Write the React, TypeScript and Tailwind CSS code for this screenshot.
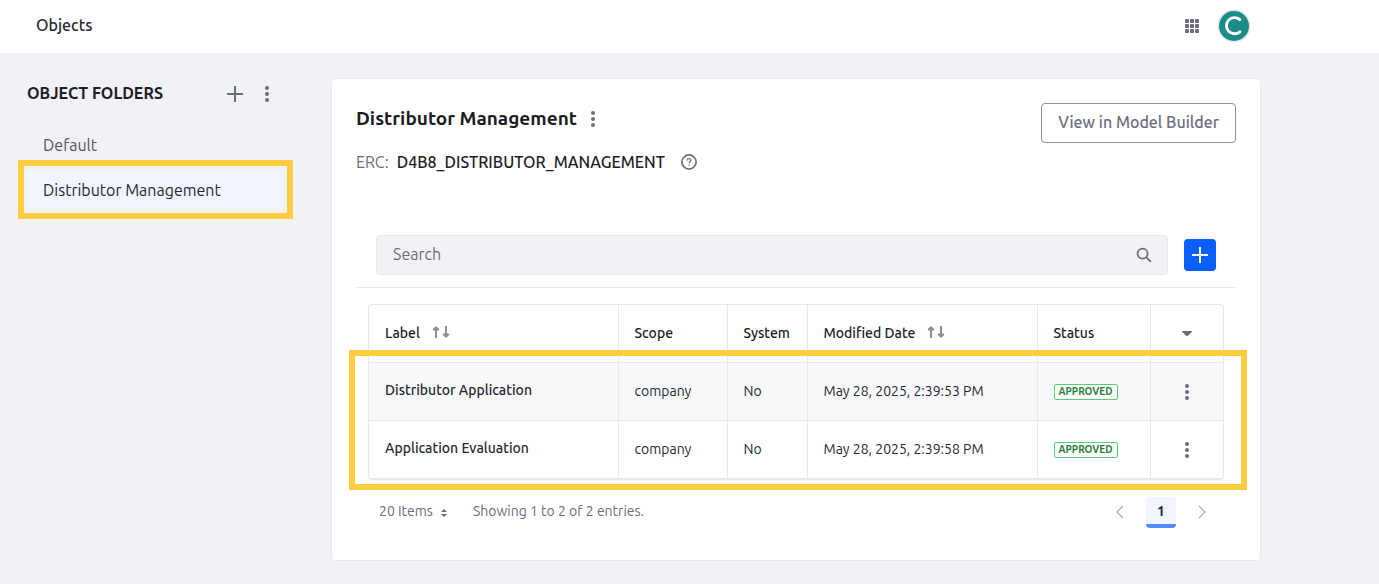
import type { ReactNode } from 'react'

interface ObjectEntry {
  label: string
  scope: string
  system: string
  modified: string
  status: string
}

const folders = ['Default', 'Distributor Management']

const entries: ObjectEntry[] = [
  {
    label: 'Distributor Application',
    scope: 'company',
    system: 'No',
    modified: 'May 28, 2025, 2:39:53 PM',
    status: 'Approved',
  },
  {
    label: 'Application Evaluation',
    scope: 'company',
    system: 'No',
    modified: 'May 28, 2025, 2:39:58 PM',
    status: 'Approved',
  },
]

function DotsIcon() {
  return (
    <svg className="h-4 w-4" viewBox="0 0 16 16" fill="currentColor" aria-hidden="true">
      <circle cx="8" cy="2" r="2" />
      <circle cx="8" cy="8" r="2" />
      <circle cx="8" cy="14" r="2" />
    </svg>
  )
}

function PlusIcon() {
  return (
    <svg className="h-4 w-4" viewBox="0 0 16 16" fill="currentColor" aria-hidden="true">
      <path d="M7 0h2v7h7v2H9v7H7V9H0V7h7z" />
    </svg>
  )
}

function GridIcon() {
  return (
    <svg className="h-4 w-4" viewBox="0 0 16 16" fill="currentColor" aria-hidden="true">
      {[1, 6, 11].map((y) =>
        [1, 6, 11].map((x) => <rect key={`${x}-${y}`} x={x} y={y} width="4" height="4" rx="0.8" />),
      )}
    </svg>
  )
}

function HelpIcon() {
  return (
    <svg className="h-4 w-4" viewBox="0 0 16 16" fill="none" stroke="currentColor" aria-hidden="true">
      <circle cx="8" cy="8" r="7.1" strokeWidth="1.7" />
      <path d="M6.2 6.5c0-2.4 3.6-2.3 3.6-.2 0 1.3-1.7 1.3-1.7 2.7" strokeWidth="1.3" />
      <circle cx="8.1" cy="11" r="0.8" fill="currentColor" stroke="none" />
    </svg>
  )
}

function SearchIcon() {
  return (
    <svg className="h-4 w-4" viewBox="0 0 16 16" fill="none" stroke="currentColor" aria-hidden="true">
      <circle cx="6.6" cy="6.6" r="5" strokeWidth="1.8" />
      <path d="M10.2 10.2l4.6 4.6" strokeWidth="1.8" />
    </svg>
  )
}

function SortIcon() {
  return (
    <svg className="h-3 w-[18px] text-[#8c8c92]" viewBox="0 0 18 12" fill="currentColor" aria-hidden="true">
      <path d="M4 0l3.4 3.2-.7 1.4H5V12H3V4.6H1.3L.6 3.2z" />
      <path d="M14 12l-3.4-3.2.7-1.4H13V0h2v7.4h1.7l.7 1.4z" />
    </svg>
  )
}

function ChevronIcon({ flip }: { flip?: boolean }) {
  return (
    <svg className="h-4 w-4" viewBox="0 0 16 16" fill="none" stroke="currentColor" aria-hidden="true">
      <path d={flip ? 'M5 2l6 6-6 6' : 'M11 2L5 8l6 6'} strokeWidth="1.4" />
    </svg>
  )
}

function IconButton({ label, children }: { label: string; children: ReactNode }) {
  return (
    <button
      type="button"
      aria-label={label}
      className="flex h-8 w-8 shrink-0 items-center justify-center rounded text-[#6b6c7e]"
    >
      {children}
    </button>
  )
}

function HeaderCell({ children, sortable }: { children: ReactNode; sortable?: boolean }) {
  return (
    <th scope="col" className="border-l border-[#e7e7ed] px-4 font-medium first:border-l-0">
      <div className="flex items-center gap-3">
        {children}
        {sortable && (
          <button type="button" aria-label="Sort" className="pb-0.5">
            <SortIcon />
          </button>
        )}
      </div>
    </th>
  )
}

function TopBar() {
  return (
    <header className="bg-white">
      <div className="flex h-[53px] max-w-[1260px] items-center justify-between pr-2 pb-0.5 pl-9">
        <h1 className="pb-0.5 text-base font-medium text-[#272833]">Objects</h1>
        <div className="flex items-center gap-2">
          <IconButton label="Applications">
            <GridIcon />
          </IconButton>
          <button
            type="button"
            aria-label="User menu"
            className="flex h-9 w-9 items-center justify-center rounded-full"
          >
            <svg className="h-[34px] w-[34px]" viewBox="0 0 34 34" fill="none" aria-hidden="true">
              <circle cx="17" cy="17" r="16.5" fill="#e4e6ea" />
              <circle cx="17" cy="17" r="15" fill="#1c8c8a" />
              <path
                d="M22.9 10.6a8.1 8.1 0 1 0 0 12.2"
                stroke="#fff"
                strokeWidth="2.9"
                strokeLinecap="round"
              />
            </svg>
          </button>
        </div>
      </div>
    </header>
  )
}

function Sidebar() {
  return (
    <aside className="w-[307px] shrink-0 pr-12">
      <div className="flex items-center justify-between pl-[3px]">
        <h2 className="pb-0.5 text-base font-semibold text-[#1c1c24] uppercase">Object Folders</h2>
        <div className="flex">
          <IconButton label="Add object folder">
            <PlusIcon />
          </IconButton>
          <IconButton label="Folder actions">
            <DotsIcon />
          </IconButton>
        </div>
      </div>
      <nav className="relative mt-4 flex flex-col gap-[5px] pl-[3px]">
        {folders.map((folder, i) => (
          <a
            key={folder}
            href="#"
            className={
              i === 1
                ? 'flex h-10 items-center rounded bg-[#f0f5ff] px-4 pb-0.5 text-base text-[#272833]'
                : 'flex h-10 items-center rounded px-4 pb-0.5 text-base text-[#54555f]'
            }
          >
            {folder}
          </a>
        ))}
        <div className="pointer-events-none absolute -right-[10px] -bottom-2 -left-[6px] h-[59px] border-6 border-[#ffcd3f]" />
      </nav>
    </aside>
  )
}

function ObjectTable() {
  return (
    <div className="relative mx-3 mt-4">
      <div className="overflow-hidden rounded border border-b-2 border-[#e7e7ed]">
        <table className="w-full table-fixed text-left text-sm text-[#272833]">
          <colgroup>
            <col />
            <col className="w-[109px]" />
            <col className="w-[80px]" />
            <col className="w-[230px]" />
            <col className="w-[113px]" />
            <col className="w-[73px]" />
          </colgroup>
          <thead>
            <tr className="h-[57px] text-[#1c1c24]">
              <HeaderCell sortable>Label</HeaderCell>
              <HeaderCell>Scope</HeaderCell>
              <HeaderCell>System</HeaderCell>
              <HeaderCell sortable>Modified Date</HeaderCell>
              <HeaderCell>Status</HeaderCell>
              <th scope="col" className="border-l border-[#e7e7ed]">
                <button
                  type="button"
                  aria-label="Columns"
                  className="mx-auto flex h-8 w-8 items-center justify-center text-[#6b6c7e]"
                >
                  <svg className="h-4 w-4" viewBox="0 0 16 16" fill="currentColor" aria-hidden="true">
                    <path d="M3.6 6h8.8c.6 0 .8.6.4 1l-4 3.7c-.5.4-1.1.4-1.6 0L3.2 7c-.4-.4-.2-1 .4-1z" />
                  </svg>
                </button>
              </th>
            </tr>
          </thead>
          <tbody>
            {entries.map((entry) => (
              <tr key={entry.label} className="h-[58px] border-t border-[#e7e7ed] odd:bg-[#f7f8fa]">
                <td className="px-4 pb-0.5 font-medium">
                  <a href="#">{entry.label}</a>
                </td>
                <td className="border-l border-[#e7e7ed] px-4">{entry.scope}</td>
                <td className="border-l border-[#e7e7ed] px-4">{entry.system}</td>
                <td className="border-l border-[#e7e7ed] px-4">{entry.modified}</td>
                <td className="border-l border-[#e7e7ed] px-4 pt-0.5">
                  <span className="flex h-4 w-fit items-center rounded-xs border border-[#5aca75] bg-white px-1 text-[10px] font-semibold text-[#287d3c] uppercase">
                    {entry.status}
                  </span>
                </td>
                <td className="border-l border-[#e7e7ed] pt-0.5">
                  <div className="flex justify-center">
                    <IconButton label={`Actions for ${entry.label}`}>
                      <DotsIcon />
                    </IconButton>
                  </div>
                </td>
              </tr>
            ))}
          </tbody>
        </table>
      </div>
      <div className="pointer-events-none absolute -right-[23px] -left-[19px] top-[46px] -bottom-[10px] border-6 border-[#ffcd3f]" />
    </div>
  )
}

function Pagination() {
  return (
    <div className="mx-3 mt-4 flex items-center justify-between pr-1.5 pl-[11px] text-sm text-[#6b6c7e]">
      <div className="flex items-center gap-[26px] pb-0.5">
        <button type="button" className="flex items-center gap-2">
          20 Items
          <svg className="mt-1 h-2 w-1.5" viewBox="0 0 6 8" fill="currentColor" aria-hidden="true">
            <path d="M3 0l3 3H0zM0 5h6L3 8z" />
          </svg>
        </button>
        <p>Showing 1 to 2 of 2 entries.</p>
      </div>
      <div className="flex items-center gap-2.5">
        <IconButton label="Previous page">
          <span className="text-[#b1b2bd]">
            <ChevronIcon />
          </span>
        </IconButton>
        <button
          type="button"
          aria-current="page"
          className="h-[31px] w-[30px] rounded border-b-4 border-[#528bff] bg-[#f0f5ff] pt-0.5 font-semibold text-[#272833]"
        >
          1
        </button>
        <IconButton label="Next page">
          <span className="text-[#b1b2bd]">
            <ChevronIcon flip />
          </span>
        </IconButton>
      </div>
    </div>
  )
}

function FolderPanel() {
  return (
    <main className="min-w-0 flex-1 rounded border border-[#e7e7ed] bg-white p-6 pb-8">
      <div className="flex items-start justify-between">
        <div>
          <div className="flex items-center">
            <h2 className="pb-0.5 text-[19px] leading-7 font-semibold text-[#1c1c24]">
              Distributor Management
            </h2>
            <IconButton label="Folder options">
              <DotsIcon />
            </IconButton>
          </div>
          <div className="mt-[11px] flex items-center gap-2 text-base">
            <span className="text-[#6b6c7e]">ERC:</span>
            <strong className="font-medium text-[#1c1c24]">D4B8_DISTRIBUTOR_MANAGEMENT</strong>
            <IconButton label="About ERC">
              <HelpIcon />
            </IconButton>
          </div>
        </div>
        <button
          type="button"
          className="h-10 rounded border border-[#8f8fa0] px-4 pb-0.5 text-base font-medium text-[#6b6c7e]"
        >
          View in Model Builder
        </button>
      </div>
      <div className="mt-[57px] flex items-center gap-4 border-b border-[#e7e7ed] px-5 pb-3">
        <div className="flex h-10 flex-1 items-center rounded border border-[#e7e7ed] bg-[#f1f2f5] pr-[7px] pl-4">
          <input
            type="search"
            aria-label="Search"
            placeholder="Search"
            className="min-w-0 flex-1 pb-0.5 text-base outline-none placeholder:text-[#6b6c7e]"
          />
          <IconButton label="Submit search">
            <SearchIcon />
          </IconButton>
        </div>
        <button
          type="button"
          aria-label="Add object"
          className="flex h-8 w-8 items-center justify-center rounded bg-[#0b5fff] text-white"
        >
          <PlusIcon />
        </button>
      </div>
      <ObjectTable />
      <Pagination />
    </main>
  )
}

export default function App() {
  return (
    <div className="min-h-screen bg-[#f1f2f5] font-['Ubuntu','Noto_Sans',sans-serif]">
      <TopBar />
      <div className="flex max-w-[1261px] items-start pt-[25px] pb-6 pl-6">
        <Sidebar />
        <FolderPanel />
      </div>
    </div>
  )
}
